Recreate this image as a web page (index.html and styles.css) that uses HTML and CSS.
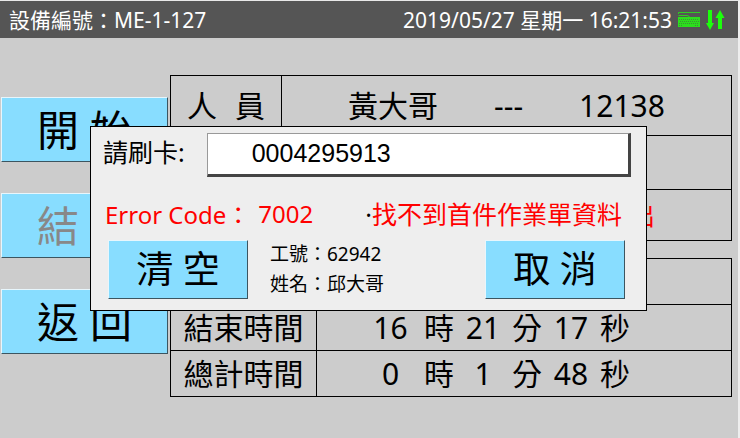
FILE: index.html
```html
<!DOCTYPE html>
<html lang="zh-Hant">
<head>
<meta charset="utf-8">
<meta name="viewport" content="width=device-width, initial-scale=1">
<title>ME-1-127</title>
<link rel="stylesheet" href="styles.css">
</head>
<body>
<div class="screen">
  <header class="topbar">
    <span>設備編號：ME-1-127</span>
    <div class="status">
      <time datetime="2019-05-27T16:21:53">2019/05/27 星期一 16:21:53</time>
      <svg class="keyboard" width="23" height="17" viewBox="0 0 23 17" aria-hidden="true">
        <path d="M0.500 3V1.500H22M0.500 4.500H9Q11.500 4.500 11.500 7" fill="none" stroke="#30cc22" stroke-width="1"/>
        <rect x="0" y="6" width="22" height="10" fill="#2be01c"/>
        <path d="M1 8.500H21M2 10.500H21M1 12.500H21" stroke="#3f8f38" stroke-width="1" stroke-dasharray="1 1"/>
        <path d="M1 14.500H5M17 14.500H21" stroke="#3f8f38" stroke-width="1" stroke-dasharray="1 1"/>
      </svg>
      <svg class="arrows" width="19" height="20" viewBox="0 0 19 20" aria-hidden="true">
        <path d="M2 0H6V13H8L4 20L0 13H2Z" fill="#1cff0c"/>
        <path d="M12 19H16V8H18.500L14 0L9.500 8H12Z" fill="#1cff0c"/>
      </svg>
    </div>
  </header>
  <main class="content">
    <nav class="actions">
      <button class="key" type="button">開 始</button>
      <button class="key" type="button" disabled>結 束</button>
      <button class="key" type="button">返 回</button>
    </nav>
    <div class="tables">
      <table class="grid staff">
        <tr class="tall">
          <th scope="row"><div class="spread"><span>人</span><span>員</span></div></th>
          <td><div class="person"><span>黃大哥</span><span>---</span><span>12138</span></div></td>
        </tr>
        <tr class="mid"><th></th><td></td></tr>
        <tr class="low"><th></th><td class="notice">出</td></tr>
      </table>
      <table class="grid times">
        <tr><th></th><td></td></tr>
        <tr>
          <th scope="row">結束時間</th>
          <td><div class="clock"><span>16</span><span>時</span><span>21</span><span>分</span><span>17</span><span>秒</span></div></td>
        </tr>
        <tr>
          <th scope="row">總計時間</th>
          <td><div class="clock"><span>0</span><span>時</span><span>1</span><span>分</span><span>48</span><span>秒</span></div></td>
        </tr>
      </table>
    </div>
  </main>
  <form class="dialog" role="dialog">
    <div class="card-row">
      <label for="card">請刷卡:</label>
      <input id="card" type="text" value="0004295913">
    </div>
    <div class="error-row">
      <span>Error Code：</span>
      <span class="code">7002</span>
      <span class="message"><span class="dot">·</span>找不到首件作業單資料</span>
    </div>
    <div class="button-row">
      <button class="key small" type="button">清 空</button>
      <div class="info">
        <span>工號：62942</span>
        <span>姓名：邱大哥</span>
      </div>
      <button class="key small" type="button">取 消</button>
    </div>
  </form>
</div>
</body>
</html>
```
FILE: styles.css
```css
* {
  box-sizing: border-box;
}

body {
  margin: 0;
  background: #ccc;
  color: #000;
  font-family: "Noto Sans", "Noto Sans CJK TC", sans-serif;
}

.screen {
  position: relative;
  min-height: 100vh;
  border-top: 1px solid #e8e8e8;
  border-right: 2px solid #eee;
}

.topbar {
  display: flex;
  align-items: center;
  justify-content: space-between;
  height: 37px;
  padding: 0 13px 0 9px;
  background: #555;
  color: #fff;
  font-size: 21px;
  line-height: 32px;
}

.status {
  display: flex;
  align-items: center;
}

.keyboard {
  margin-left: 6px;
}

.arrows {
  margin-left: 5px;
}

.content {
  display: flex;
  padding: 37px 6px 0 1px;
}

.actions {
  display: flex;
  flex-direction: column;
  gap: 31px;
  width: 167px;
  padding-top: 22px;
}

.key {
  height: 65px;
  padding: 0;
  border: 1px solid;
  border-color: #e8f6fc #3c5560 #3c5560 #e8f6fc;
  background: #8df;
  color: #000;
  font-family: inherit;
  font-size: 42px;
  line-height: 62px;
}

.key:disabled {
  color: #888;
}

.tables {
  display: flex;
  flex: 1;
  flex-direction: column;
  gap: 17px;
  padding-left: 2px;
}

.grid {
  width: 100%;
  border-collapse: collapse;
  table-layout: fixed;
  font-size: 30px;
  line-height: 40px;
}

.grid th,
.grid td {
  padding: 0;
  border: 1px solid #000;
  font-weight: 400;
}

.staff th {
  width: 111px;
}

.times th {
  width: 146px;
}

.tall {
  height: 60px;
}

.mid {
  height: 54px;
}

.low {
  height: 51px;
}

.times tr {
  height: 46px;
}

.spread {
  display: flex;
  justify-content: center;
  gap: 18px;
}

.person {
  display: flex;
  justify-content: center;
  gap: 56px;
}

.grid .notice {
  padding-right: 76px;
  color: #f00;
  font-size: 25px;
  text-align: right;
}

.clock {
  display: grid;
  grid-template-columns: 67px 30px 58px 30px 58px 30px;
  padding-left: 40px;
  text-align: center;
}

.dialog {
  position: absolute;
  top: 125px;
  left: 90px;
  right: 91px;
  border: 1px solid #000;
  padding: 6px 14px 11px;
  background: #eee;
}

.card-row {
  display: flex;
  align-items: flex-start;
  gap: 22px;
  padding-right: 1px;
  font-size: 25px;
  line-height: 38px;
}

.card-row label {
  flex: none;
  margin-left: -2px;
}

.card-row input {
  flex: 1;
  min-width: 0;
  height: 44px;
  padding: 0 0 2px 44px;
  border: solid;
  border-width: 1px 3px 3px 1px;
  border-color: #999 #444 #444 #999;
  border-radius: 0;
  background: #fff;
  font-family: "Liberation Sans", sans-serif;
  font-size: 25px;
}

.error-row {
  display: flex;
  align-items: center;
  height: 62px;
  padding-top: 10px;
  color: #f00;
  font-size: 24px;
}

.code {
  margin-left: 8px;
}

.message {
  margin-left: auto;
  padding-right: 10px;
  font-size: 25px;
}

.dot {
  color: #000;
}

.button-row {
  display: flex;
  align-items: center;
  padding: 0 7px 0 3px;
}

.small {
  width: 140px;
  height: 59px;
  font-size: 37px;
  line-height: 56px;
}

.info {
  display: flex;
  flex: 1;
  flex-direction: column;
  padding-left: 22px;
  font-size: 19px;
  line-height: 30px;
}
```
